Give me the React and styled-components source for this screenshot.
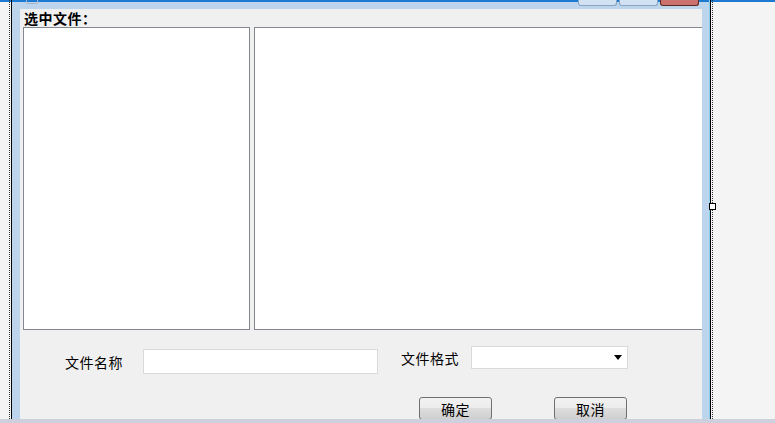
import React from 'react'
import styled, { createGlobalStyle } from 'styled-components'

const Global = createGlobalStyle`
    html, body {
        margin: 0;
        background: #f4f4f4;
    }
    * {
        box-sizing: border-box;
    }
`

const Screen = styled.div`
    position: relative;
    width: 775px;
    height: 423px;
    overflow: hidden;
    display: flex;
    flex-direction: column;
    font-family: "Noto Sans CJK SC", "Liberation Sans", sans-serif;
    color: #000;
`

const Desk = styled.div`
    flex: 1;
    display: flex;
    min-height: 0;
    overflow: hidden;
    background: linear-gradient(#1c7bd0 0 2px, #f4f4f4 2px);
`

const Gutter = styled.div`
    width: ${p => p.$w ? p.$w + 'px' : 'auto'};
    flex: ${p => p.$w ? 'none' : '1'};
`

const Guide = styled.div`
    flex: none;
    width: 3px;
    border-left: 1px ${p => p.$right ? 'solid #000' : 'dotted #333'};
    border-right: 1px ${p => p.$right ? 'dotted #333' : 'solid #000'};
`

const Window = styled.div`
    flex: none;
    width: 698px;
    display: flex;
    flex-direction: column;
    background: linear-gradient(#1c7bd0 0 2px, #bcd4ec 2px);
    border-right: 1px solid #8ad0f0;
`

const Caption = styled.div`
    height: 9px;
    flex: none;
    display: flex;
    align-items: flex-start;
    padding: 0 10px 0 14px;
`

const AppIcon = styled.div`
    width: 12px;
    height: 4px;
    border: 1px solid #a8b8cc;
    border-top: none;
    border-radius: 0 0 2px 2px;
    margin-right: auto;
`

const CaptionButton = styled.div`
    width: 39px;
    height: 6px;
    margin-left: 2px;
    border: 1px solid ${p => p.$close ? '#5a2626' : '#8aa4c4'};
    border-top: none;
    border-radius: 0 0 3px 3px;
    background: ${p => p.$close ? '#cc726e' : '#d3e2f2'};
`

const Client = styled.div`
    flex: 1;
    margin: 0 7px 0 8px;
    background: #f0f0f0;
    overflow: hidden;
    display: flex;
    flex-direction: column;
`

const Title = styled.div`
    height: 18px;
    line-height: 18px;
    padding-left: 4px;
    font-size: 14px;
    font-weight: 700;
    letter-spacing: 0.5px;
    flex: none;
`

const Lists = styled.div`
    display: flex;
    gap: 4px;
    margin-left: 3px;
    height: 303px;
    flex: none;
`

const ListBox = styled.div`
    flex: none;
    width: ${p => p.$w}px;
    height: 100%;
    background: #fff;
    border: 1px solid #828790;
`

const FieldRow = styled.div`
    display: flex;
    align-items: flex-start;
    margin-top: 16px;
    padding-left: 45px;
    flex: none;
`

const Label = styled.span`
    flex: none;
    width: ${p => p.$w}px;
    font-size: 14px;
    line-height: 20px;
    letter-spacing: 0.5px;
    margin-top: ${p => p.$top}px;
    margin-left: ${p => p.$left || 0}px;
    margin-right: ${p => p.$right}px;
    white-space: nowrap;
`

const TextBox = styled.input`
    flex: none;
    width: 235px;
    height: 25px;
    margin-top: 3px;
    padding: 0 3px;
    border: 1px solid #dadada;
    background: #fff;
    outline: none;
    font: inherit;
    font-size: 14px;
`

const Combo = styled.div`
    flex: none;
    width: 157px;
    height: 23px;
    border: 1px solid #dadada;
    background: #fff;
    display: flex;
    align-items: center;
    justify-content: flex-end;
    padding-right: 5px;
`

const Arrow = styled.span`
    width: 0;
    height: 0;
    border-left: 4px solid transparent;
    border-right: 4px solid transparent;
    border-top: 5px solid #000;
`

const ButtonRow = styled.div`
    display: flex;
    gap: 62px;
    margin-top: 23px;
    padding-left: 399px;
    flex: none;
`

const Button = styled.button`
    width: 73px;
    height: 23px;
    padding: 0;
    border: 1px solid #707070;
    border-radius: 3px;
    background: linear-gradient(#f2f2f2 0%, #ebebeb 50%, #dddddd 50%, #cfcfcf 100%);
    font-family: inherit;
    font-size: 14px;
    line-height: 20px;
    letter-spacing: 0.5px;
    color: #000;
`

const BottomBar = styled.div`
    height: 4px;
    flex: none;
    background: #cfd0dd;
`

const Handle = styled.div`
    position: absolute;
    left: 709px;
    top: 203px;
    width: 7px;
    height: 7px;
    background: #fff;
    border: 1px solid #000;
`

export default function App() {
    return (
        <Screen>
            <Global />
            <Desk>
                <Gutter $w={9} />
                <Guide />
                <Window>
                    <Caption>
                        <AppIcon />
                        <CaptionButton />
                        <CaptionButton />
                        <CaptionButton $close />
                    </Caption>
                    <Client>
                        <Title>选中文件：</Title>
                        <Lists>
                            <ListBox $w={227} />
                            <ListBox $w={452} />
                        </Lists>
                        <FieldRow>
                            <Label $w={58} $top={6} $right={20}>文件名称</Label>
                            <TextBox readOnly defaultValue="" />
                            <Label $w={59} $top={2} $left={23} $right={11}>文件格式</Label>
                            <Combo>
                                <Arrow />
                            </Combo>
                        </FieldRow>
                        <ButtonRow>
                            <Button>确定</Button>
                            <Button>取消</Button>
                        </ButtonRow>
                    </Client>
                </Window>
                <Guide $right />
                <Gutter />
            </Desk>
            <BottomBar />
            <Handle />
        </Screen>
    )
}
